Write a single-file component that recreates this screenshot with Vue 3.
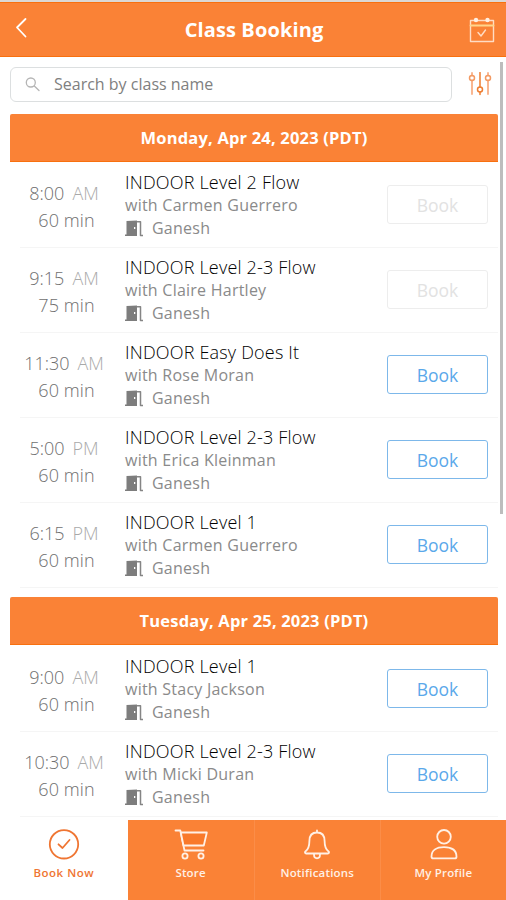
<script setup>
const days = [
  {
    label: 'Monday, Apr 24, 2023 (PDT)',
    classes: [
      { time: '8:00', half: 'AM', length: '60 min', name: 'INDOOR Level 2 Flow', teacher: 'Carmen Guerrero', open: false },
      { time: '9:15', half: 'AM', length: '75 min', name: 'INDOOR Level 2-3 Flow', teacher: 'Claire Hartley', open: false },
      { time: '11:30', half: 'AM', length: '60 min', name: 'INDOOR Easy Does It', teacher: 'Rose Moran', open: true },
      { time: '5:00', half: 'PM', length: '60 min', name: 'INDOOR Level 2-3 Flow', teacher: 'Erica Kleinman', open: true },
      { time: '6:15', half: 'PM', length: '60 min', name: 'INDOOR Level 1', teacher: 'Carmen Guerrero', open: true },
    ],
  },
  {
    label: 'Tuesday, Apr 25, 2023 (PDT)',
    classes: [
      { time: '9:00', half: 'AM', length: '60 min', name: 'INDOOR Level 1', teacher: 'Stacy Jackson', open: true },
      { time: '10:30', half: 'AM', length: '60 min', name: 'INDOOR Level 2-3 Flow', teacher: 'Micki Duran', open: true },
    ],
  },
]
</script>

<template>
  <div class="screen">
    <header class="top">
      <svg class="back" width="14" height="22" viewBox="0 0 14 22"><path d="M11.5 2 3 10.5l8.500 9" /></svg>
      <h1>Class Booking</h1>
      <svg class="calendar" width="26" height="26" viewBox="0 0 26 26">
        <path d="M1.500 3.500h23v21h-23z" /><path class="rule" d="M1.500 8.500h23" />
        <circle cx="7" cy="3" r="2.200" /><circle cx="18.500" cy="3" r="2.200" />
        <path d="m9 15.500 3 3.500 4.500-6" />
      </svg>
    </header>

    <main class="content">
      <div class="tools">
        <label class="search">
          <svg width="16" height="16" viewBox="0 0 16 16"><circle cx="5.800" cy="5.500" r="4.500" /><path d="m9.300 9 4.700 4.500" /></svg>
          <span>Search by class name</span>
        </label>
        <svg class="filter" width="24" height="24" viewBox="0 0 24 24">
          <path class="soft" d="M4 1v2.500M4 8.500V22M20 1v2.500M20 8.500V22" />
          <path d="M12 .5V15M12 20v2.500" />
          <circle class="knob" cx="4" cy="6" r="2.500" /><circle cx="12" cy="17.500" r="2.500" /><circle class="knob" cx="20" cy="6" r="2.500" />
        </svg>
      </div>

      <section v-for="day in days" :key="day.label" class="day">
        <h2>{{ day.label }}</h2>
        <article v-for="c in day.classes" :key="c.time" class="row">
          <div class="when">
            <div class="clock">{{ c.time }}<span>{{ c.half }}</span></div>
            <div class="length">{{ c.length }}</div>
          </div>
          <div class="info">
            <div class="name">{{ c.name }}</div>
            <div class="teacher">with {{ c.teacher }}</div>
            <div class="room">
              <svg width="18" height="17" viewBox="0 0 18 17">
                <path class="leaf" fill-rule="evenodd" d="M1.500 1 12 .5V16H0v-1.500h1.500zM9 7v2h1.300V7z" />
                <path class="frame" d="M12 1.700h3.500v13.800H18" />
              </svg>
              <span>Ganesh</span>
            </div>
          </div>
          <button class="book" :disabled="!c.open">Book</button>
        </article>
      </section>
      <div class="thumb"></div>
    </main>

    <nav class="tabs">
      <a class="tab active">
        <svg width="34" height="34" viewBox="0 0 34 34"><circle cx="17" cy="17.300" r="14.200" /><path d="m11.500 17.300 4 3.700 7-8" /></svg>
        <span class="t-book">Book Now</span>
      </a>
      <a class="tab">
        <svg width="34" height="34" viewBox="0 0 34 34">
          <path d="M1.500 3.500h4.800l4.200 20h19" /><path class="basket" d="M6.800 5.500h26l-3 13H9.500z" />
          <circle cx="11" cy="29" r="2.600" /><circle cx="27" cy="29" r="2.600" />
        </svg>
        <span class="t-store">Store</span>
      </a>
      <a class="tab">
        <svg width="34" height="34" viewBox="0 0 34 34">
          <path d="M17 5.500c-5 0-7.600 3.500-7.600 8.500 0 6-1.200 8.500-4 10.500-.8.800-.5 2 .8 2h21.600c1.300 0 1.600-1.200.8-2-2.800-2-4-4.500-4-10.500 0-5-2.600-8.500-7.600-8.500zM17 5.500V3.500M14 27.500c0 5 6 5 6 0" />
        </svg>
        <span class="t-notes">Notifications</span>
      </a>
      <a class="tab">
        <svg width="34" height="34" viewBox="0 0 34 34">
          <circle cx="18" cy="9.800" r="6.800" /><path d="M5.500 29.700c0-6.500 5-9.500 12.500-9.500s12.500 3 12.500 9.500c0 1.200-.6 1.700-1.700 1.700H7.200c-1.100 0-1.700-.5-1.700-1.700z" />
        </svg>
        <span class="t-profile">My Profile</span>
      </a>
    </nav>
  </div>
</template>

<style>
body {
  margin: 0;
  background: #fff;
}
</style>

<style scoped>
* {
  box-sizing: border-box;
}
.screen {
  width: 506px;
  height: 900px;
  overflow: hidden;
  display: flex;
  flex-direction: column;
  background: #fff;
  font-family: 'Open Sans', 'Noto Sans', sans-serif;
  color: #808080;
}
svg {
  display: block;
  fill: none;
  stroke: currentColor;
  stroke-width: 1.500;
  stroke-linecap: round;
  stroke-linejoin: round;
  flex: none;
}
.top {
  flex: none;
  height: 57px;
  padding: 0 11px 0 13px;
  display: grid;
  grid-template-columns: 40px 1fr 40px;
  align-items: center;
  background: #fa8236;
  border-top: 2px solid #dcd8d5;
  border-bottom: 1px solid #f8700f;
  box-shadow: inset 0 1px #f8700f;
  color: #fff;
}
.top .back {
  margin-top: -3px;
  margin-left: 1px;
  stroke-width: 1.800;
}
.top h1 {
  margin: 2px 0 0;
  text-align: center;
  font-size: 20px;
  line-height: 28px;
  font-weight: 700;
  letter-spacing: 0.120px;
}
.calendar {
  justify-self: end;
  margin-top: 2px;
  color: #ffdcc4;
  stroke-width: 1.400;
}
.calendar .rule {
  stroke: #ffd58c;
  stroke-width: 1.800;
}
.calendar circle {
  fill: #ffeee2;
  stroke: none;
}
.content {
  position: relative;
  flex: 1;
  min-height: 0;
  padding: 10px 8px 0 10px;
}
.thumb {
  position: absolute;
  right: 3px;
  top: 5px;
  width: 3px;
  height: 452px;
  background: #bdbdbd;
}
.tools {
  display: flex;
  align-items: center;
  gap: 16px;
  margin-bottom: 12px;
}
.search {
  width: 442px;
  height: 35px;
  padding: 0 14px;
  display: flex;
  align-items: center;
  gap: 13px;
  border: 1px solid #dcdfe0;
  border-radius: 6px;
  font-size: 16px;
}
.search span {
  margin-top: -2px;
}
.search svg {
  color: #b5b5b5;
  stroke-width: 1.300;
}
.filter {
  margin-top: -1px;
  color: #ee7d31;
}
.filter .soft {
  stroke: #f9b792;
  stroke-width: 2;
}
.filter .knob {
  stroke: #f39a63;
}
.day {
  margin-bottom: 9px;
}
.day h2 {
  margin: 0 0 1px;
  height: 48px;
  line-height: 48px;
  text-align: center;
  font-size: 16.500px;
  font-weight: 700;
  letter-spacing: 0.180px;
  color: #fff;
  background: #fa8236;
  border-radius: 2px 2px 0 0;
  box-shadow: inset 0 -1px #f8700f;
}
.row {
  height: 85px;
  margin-left: 10px;
  padding-right: 10px;
  display: grid;
  grid-template-columns: 90px 1fr 101px;
  border-bottom: 1px solid #f5f5f5;
}
.day + .day .row:first-of-type {
  height: 86px;
  padding-top: 1px;
}
.when {
  padding-top: 17px;
  font-size: 18px;
  line-height: 27px;
  font-weight: 300;
  color: #6f6f6f;
}
.clock {
  margin-left: -2px;
  text-align: center;
}
.clock span {
  margin-left: 8px;
  color: #a9a9a9;
}
.length {
  padding-left: 3px;
  text-align: center;
  letter-spacing: 0.100px;
}
.info {
  padding-left: 15px;
}
.name {
  padding-top: 7px;
  line-height: 24px;
  font-size: 18px;
  font-weight: 300;
  letter-spacing: 0.190px;
  color: #000;
  white-space: nowrap;
}
.teacher {
  line-height: 23px;
  font-size: 16px;
  font-weight: 400;
  letter-spacing: 0.240px;
  color: #8a8a8a;
}
.room {
  display: flex;
  align-items: center;
  gap: 9px;
  line-height: 23px;
  font-size: 16px;
  font-weight: 400;
  letter-spacing: 0.240px;
  color: #8a8a8a;
}
.room .leaf {
  fill: #7d7d7d;
  stroke: none;
}
.room .frame {
  stroke: #858585;
}
.book {
  height: 39px;
  margin-top: 22px;
  padding: 0;
  border: 1.500px solid #7db8ea;
  border-radius: 3px;
  background: #fff;
  font: 400 17.500px/36px 'Open Sans', sans-serif;
  color: #5aa8ea;
}
.book:disabled {
  border-color: #ededed;
  color: #e2e2e2;
}
.tabs {
  flex: none;
  height: 80px;
  display: grid;
  grid-template-columns: 127.500px repeat(3, 1fr);
  background: #fa8236;
}
.tab {
  padding-top: 7px;
  display: flex;
  flex-direction: column;
  align-items: center;
  color: #fff0e5;
  font-size: 11.500px;
  line-height: 18px;
  font-weight: 600;
  letter-spacing: 0.180px;
}
.tab svg {
  stroke-width: 1.800;
}
.tab .basket {
  fill: #f9792a;
}
.tab span {
  margin-top: 3px;
}
.tab .t-book {
  letter-spacing: 0.500px;
}
.tab + .tab + .tab {
  border-left: 1px solid #fb8d48;
}
.tab.active {
  background: #fff;
  color: #ef7532;
}
</style>
